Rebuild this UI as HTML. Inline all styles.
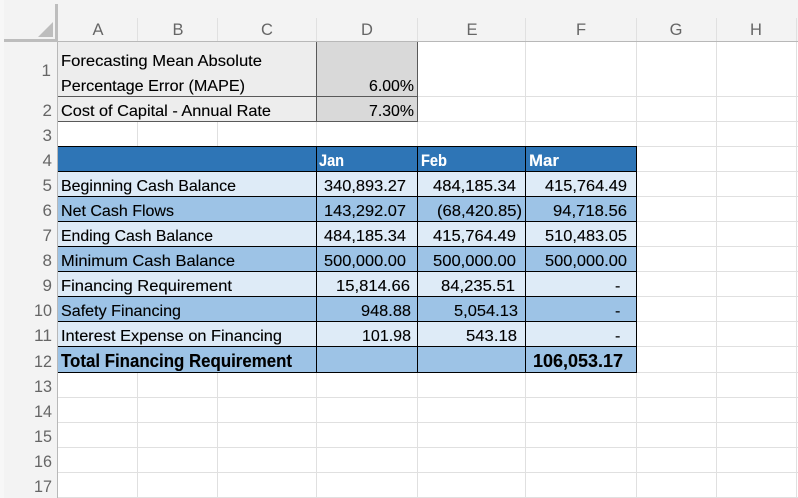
<!DOCTYPE html>
<html><head><meta charset="utf-8"><style>
html,body{margin:0;padding:0;background:#fff;width:798px;height:498px;overflow:hidden}
svg{display:block}
text{font-family:"Liberation Sans",sans-serif;font-size:16px;fill:#000;stroke:#000;stroke-width:.12px}
.h{fill:#666;stroke:none;font-size:16.5px;text-anchor:middle}
.r{fill:#666;stroke:none;font-size:17px;text-anchor:end}
.b{font-weight:bold}
</style></head><body>
<svg width="798" height="498" viewBox="0 0 798 498" shape-rendering="crispEdges">
<rect width="798" height="498" fill="#fff"/>
<!-- headers -->
<rect width="798" height="41" fill="#f3f3f3"/>
<rect y="41" width="57" height="457" fill="#f3f3f3"/>
<rect width="4" height="498" fill="#f7f7f7"/>
<!-- grid -->
<g fill="#e0e0e0">
<rect x="137" y="18" width="1" height="23"/><rect x="217" y="18" width="1" height="23"/><rect x="316" y="18" width="1" height="23"/><rect x="417" y="18" width="1" height="23"/><rect x="525" y="18" width="1" height="23"/><rect x="636" y="18" width="1" height="23"/><rect x="716" y="18" width="1" height="23"/><rect x="796" y="18" width="1" height="23"/>
<rect x="137" y="122" width="1" height="376"/><rect x="217" y="122" width="1" height="376"/><rect x="316" y="122" width="1" height="376"/><rect x="417" y="42" width="1" height="456"/><rect x="525" y="42" width="1" height="456"/><rect x="636" y="42" width="1" height="456"/><rect x="716" y="42" width="1" height="456"/><rect x="796" y="42" width="1" height="456"/>
<rect x="58" y="96" width="740" height="1"/><rect x="58" y="121" width="740" height="1"/><rect x="58" y="146" width="740" height="1"/><rect x="58" y="171" width="740" height="1"/><rect x="58" y="196" width="740" height="1"/><rect x="58" y="221" width="740" height="1"/><rect x="58" y="246" width="740" height="1"/><rect x="58" y="271" width="740" height="1"/><rect x="58" y="296" width="740" height="1"/><rect x="58" y="321" width="740" height="1"/><rect x="58" y="346" width="740" height="1"/><rect x="58" y="372" width="740" height="1"/><rect x="58" y="397" width="740" height="1"/><rect x="58" y="422" width="740" height="1"/><rect x="58" y="447" width="740" height="1"/><rect x="58" y="472" width="740" height="1"/><rect x="58" y="497" width="740" height="1"/>
</g>
<rect x="4" y="41" width="794" height="1" fill="#b8b8b8"/>
<rect x="57" y="41" width="1" height="457" fill="#b8b8b8"/>
<rect x="55" y="4" width="3" height="37" fill="#bdbdbd"/>
<rect x="4" y="39" width="54" height="3" fill="#bdbdbd"/>
<polygon points="38,37 53,37 53,22" fill="#bdbdbd" shape-rendering="auto"/>
<!-- top box -->
<rect x="58" y="42" width="258" height="79" fill="#ededed"/>
<rect x="317" y="42" width="100" height="79" fill="#d9d9d9"/>
<g fill="#595959">
<rect x="58" y="96" width="359" height="1"/><rect x="58" y="121" width="360" height="1"/>
<rect x="316" y="42" width="1" height="80"/><rect x="417" y="42" width="1" height="80"/>
</g>
<!-- table fills -->
<rect x="58" y="147" width="578" height="24" fill="#2e75b6"/>
<rect x="58" y="172" width="578" height="24" fill="#deebf7"/>
<rect x="58" y="197" width="578" height="24" fill="#9dc3e6"/>
<rect x="58" y="222" width="578" height="24" fill="#deebf7"/>
<rect x="58" y="247" width="578" height="24" fill="#9dc3e6"/>
<rect x="58" y="272" width="578" height="24" fill="#deebf7"/>
<rect x="58" y="297" width="578" height="24" fill="#9dc3e6"/>
<rect x="58" y="322" width="578" height="24" fill="#deebf7"/>
<rect x="58" y="347" width="578" height="25" fill="#9dc3e6"/>
<g fill="#000">
<rect x="58" y="146" width="579" height="1"/><rect x="58" y="171" width="579" height="1"/><rect x="58" y="196" width="579" height="1"/><rect x="58" y="221" width="579" height="1"/><rect x="58" y="246" width="579" height="1"/><rect x="58" y="271" width="579" height="1"/><rect x="58" y="296" width="579" height="1"/><rect x="58" y="321" width="579" height="1"/><rect x="58" y="346" width="579" height="1"/><rect x="58" y="372" width="579" height="1"/>
<rect x="316" y="146" width="1" height="227"/><rect x="417" y="146" width="1" height="227"/><rect x="525" y="146" width="1" height="227"/><rect x="636" y="146" width="1" height="227"/>
</g>
<g shape-rendering="auto">
<!-- column letters -->
<text class="h" x="98" y="35">A</text><text class="h" x="178" y="35">B</text><text class="h" x="267" y="35">C</text><text class="h" x="367" y="35">D</text><text class="h" x="472" y="35">E</text><text class="h" x="581" y="35">F</text><text class="h" x="676" y="35">G</text><text class="h" x="756" y="35">H</text>
<!-- row numbers -->
<text class="r" x="51" y="76">1</text><text class="r" x="52" y="116">2</text><text class="r" x="52" y="141">3</text><text class="r" x="52" y="166">4</text><text class="r" x="52" y="191">5</text><text class="r" x="52" y="216">6</text><text class="r" x="52" y="241">7</text><text class="r" x="52" y="266">8</text><text class="r" x="52" y="291">9</text>
<text class="r" x="52" y="316" textLength="18" lengthAdjust="spacingAndGlyphs">10</text><text class="r" x="52" y="341" textLength="18" lengthAdjust="spacingAndGlyphs">11</text><text class="r" x="52" y="367" textLength="18" lengthAdjust="spacingAndGlyphs">12</text><text class="r" x="52" y="392" textLength="18" lengthAdjust="spacingAndGlyphs">13</text><text class="r" x="52" y="417" textLength="18" lengthAdjust="spacingAndGlyphs">14</text><text class="r" x="52" y="442" textLength="18" lengthAdjust="spacingAndGlyphs">15</text><text class="r" x="52" y="467" textLength="18" lengthAdjust="spacingAndGlyphs">16</text><text class="r" x="52" y="492" textLength="18" lengthAdjust="spacingAndGlyphs">17</text>
<!-- labels -->
<text x="61" y="66" textLength="201" lengthAdjust="spacingAndGlyphs">Forecasting Mean Absolute</text>
<text x="61" y="91" textLength="184" lengthAdjust="spacingAndGlyphs">Percentage Error (MAPE)</text>
<text x="61" y="116" textLength="210" lengthAdjust="spacingAndGlyphs">Cost of Capital - Annual Rate</text>
<text x="61" y="191" textLength="175" lengthAdjust="spacingAndGlyphs">Beginning Cash Balance</text>
<text x="61" y="216" textLength="113" lengthAdjust="spacingAndGlyphs">Net Cash Flows</text>
<text x="61" y="241" textLength="152" lengthAdjust="spacingAndGlyphs">Ending Cash Balance</text>
<text x="61" y="266" textLength="174" lengthAdjust="spacingAndGlyphs">Minimum Cash Balance</text>
<text x="61" y="291" textLength="171" lengthAdjust="spacingAndGlyphs">Financing Requirement</text>
<text x="61" y="316" textLength="120" lengthAdjust="spacingAndGlyphs">Safety Financing</text>
<text x="61" y="341" textLength="221" lengthAdjust="spacingAndGlyphs">Interest Expense on Financing</text>
<text class="b" x="61" y="367" style="font-size:18px" textLength="231" lengthAdjust="spacingAndGlyphs">Total Financing Requirement</text>
<!-- header row -->
<text class="b" x="319" y="166" style="fill:#fff;stroke:#fff;font-size:17px" textLength="25" lengthAdjust="spacingAndGlyphs">Jan</text>
<text class="b" x="421" y="166" style="fill:#fff;stroke:#fff;font-size:17px" textLength="26" lengthAdjust="spacingAndGlyphs">Feb</text>
<text class="b" x="529" y="166" style="fill:#fff;stroke:#fff;font-size:17px" textLength="30" lengthAdjust="spacingAndGlyphs">Mar</text>
<!-- pct -->
<text x="369" y="91" textLength="45" lengthAdjust="spacingAndGlyphs">6.00%</text>
<text x="369" y="116" textLength="45" lengthAdjust="spacingAndGlyphs">7.30%</text>
<!-- numbers -->
<text x="324" y="191" textLength="82" lengthAdjust="spacingAndGlyphs">340,893.27</text>
<text x="433" y="191" textLength="83" lengthAdjust="spacingAndGlyphs">484,185.34</text>
<text x="545" y="191" textLength="82" lengthAdjust="spacingAndGlyphs">415,764.49</text>
<text x="324" y="216" textLength="82" lengthAdjust="spacingAndGlyphs">143,292.07</text>
<text x="437" y="216" textLength="85" lengthAdjust="spacingAndGlyphs">(68,420.85)</text>
<text x="553" y="216" textLength="74" lengthAdjust="spacingAndGlyphs">94,718.56</text>
<text x="324" y="241" textLength="82" lengthAdjust="spacingAndGlyphs">484,185.34</text>
<text x="433" y="241" textLength="83" lengthAdjust="spacingAndGlyphs">415,764.49</text>
<text x="545" y="241" textLength="82" lengthAdjust="spacingAndGlyphs">510,483.05</text>
<text x="324" y="266" textLength="82" lengthAdjust="spacingAndGlyphs">500,000.00</text>
<text x="433" y="266" textLength="83" lengthAdjust="spacingAndGlyphs">500,000.00</text>
<text x="545" y="266" textLength="82" lengthAdjust="spacingAndGlyphs">500,000.00</text>
<text x="336" y="291" textLength="74" lengthAdjust="spacingAndGlyphs">15,814.66</text>
<text x="441" y="291" textLength="74" lengthAdjust="spacingAndGlyphs">84,235.51</text>
<text x="615" y="291">-</text>
<text x="361" y="316" textLength="50" lengthAdjust="spacingAndGlyphs">948.88</text>
<text x="454" y="316" textLength="64" lengthAdjust="spacingAndGlyphs">5,054.13</text>
<text x="615" y="316">-</text>
<text x="362" y="341" textLength="49" lengthAdjust="spacingAndGlyphs">101.98</text>
<text x="466" y="341" textLength="51" lengthAdjust="spacingAndGlyphs">543.18</text>
<text x="615" y="341">-</text>
<text class="b" x="533" y="367" style="font-size:18px" textLength="90" lengthAdjust="spacingAndGlyphs">106,053.17</text>
</g>
</svg>
</body></html>
